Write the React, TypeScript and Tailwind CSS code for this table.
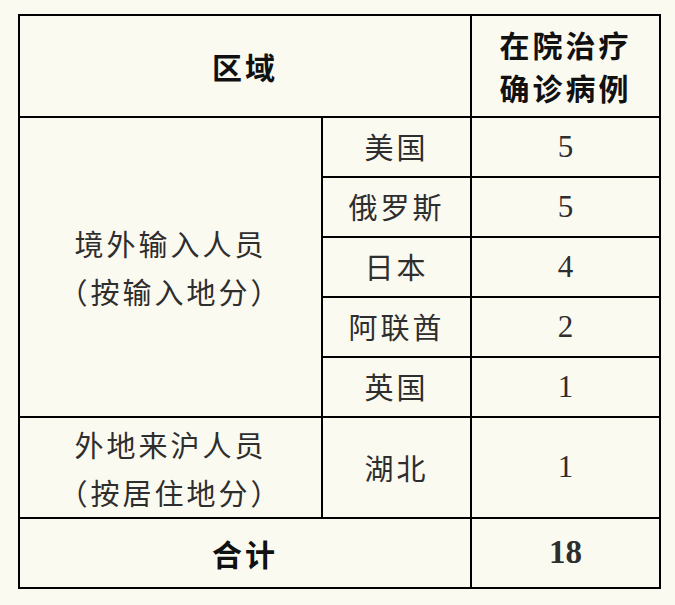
import React from "react";

const cjk = "font-['Noto_Sans_CJK_SC','Noto_Sans',sans-serif]";
const serif = "font-['Liberation_Serif','Times_New_Roman',serif]";

const rows = [
  { name: "美国", n: "5" },
  { name: "俄罗斯", n: "5" },
  { name: "日本", n: "4" },
  { name: "阿联酋", n: "2" },
  { name: "英国", n: "1" },
];

export default function App() {
  return (
    <div className="w-[675px] h-[605px] bg-[#fbfaf0] pt-[14px] pl-[18px]">
      <table className="border-collapse border-2 border-black table-fixed w-[641px]">
        <colgroup>
          <col className="w-[303px]" />
          <col className="w-[149px]" />
          <col className="w-[189px]" />
        </colgroup>
        <tbody>
          <tr className="h-[102px]">
            <td
              colSpan={2}
              className={`border-2 border-black text-center align-middle text-[30px] font-bold tracking-[3px] text-[#111] leading-[43px] ${cjk}`}
            >
              区域
            </td>
            <td
              className={`border-2 border-black text-center align-middle text-[30px] font-bold tracking-[3px] text-[#111] leading-[43px] ${cjk}`}
            >
              在院治疗
              <br />
              确诊病例
            </td>
          </tr>
          {rows.map((r, i) => (
            <tr key={r.name} className="h-[60px]">
              {i === 0 && (
                <td
                  rowSpan={5}
                  className={`border-2 border-black text-center align-middle text-[29px] tracking-[3px] text-[#2e2e2e] leading-[48px] ${cjk}`}
                >
                  境外输入人员
                  <br />
                  （按输入地分）
                </td>
              )}
              <td
                className={`border-2 border-black text-center align-middle text-[29px] tracking-[3px] text-[#2e2e2e] ${cjk}`}
              >
                {r.name}
              </td>
              <td
                className={`border-2 border-black text-center align-middle text-[31px] text-[#2e2e2e] ${serif}`}
              >
                {r.n}
              </td>
            </tr>
          ))}
          <tr className="h-[101px]">
            <td
              className={`border-2 border-black text-center align-middle text-[29px] tracking-[3px] text-[#2e2e2e] leading-[48px] ${cjk}`}
            >
              外地来沪人员
              <br />
              （按居住地分）
            </td>
            <td
              className={`border-2 border-black text-center align-middle text-[29px] tracking-[3px] text-[#2e2e2e] ${cjk}`}
            >
              湖北
            </td>
            <td
              className={`border-2 border-black text-center align-middle text-[31px] text-[#2e2e2e] ${serif}`}
            >
              1
            </td>
          </tr>
          <tr className="h-[70px]">
            <td
              colSpan={2}
              className={`border-2 border-black text-center align-middle text-[30px] font-bold tracking-[3px] text-[#111] ${cjk}`}
            >
              合计
            </td>
            <td
              className={`border-2 border-black text-center align-middle text-[33px] font-bold text-[#2e2e2e] ${serif}`}
            >
              18
            </td>
          </tr>
        </tbody>
      </table>
    </div>
  );
}
